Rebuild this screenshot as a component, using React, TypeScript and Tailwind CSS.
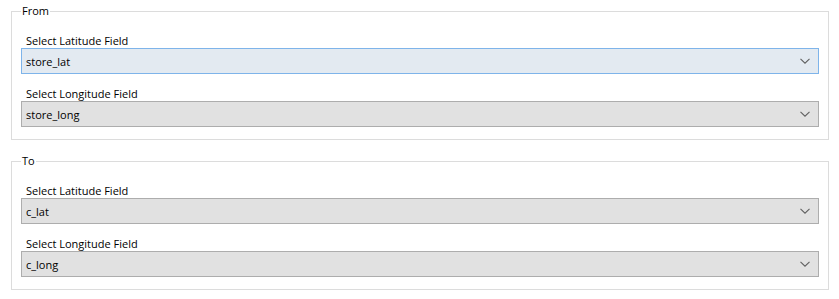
type Field = { label: string; value: string; hover?: boolean };

const GROUPS: { title: string; fields: Field[] }[] = [
  {
    title: "From",
    fields: [
      { label: "Select Latitude Field", value: "store_lat", hover: true },
      { label: "Select Longitude Field", value: "store_long" },
    ],
  },
  {
    title: "To",
    fields: [
      { label: "Select Latitude Field", value: "c_lat" },
      { label: "Select Longitude Field", value: "c_long" },
    ],
  },
];

function Chevron() {
  return (
    <svg width="10" height="6" viewBox="0 0 10 6" className="shrink-0">
      <polyline
        points="0.5,0.8 5,5.2 9.5,0.8"
        fill="none"
        stroke="#606060"
        strokeWidth="1.1"
      />
    </svg>
  );
}

function Combo({ value, hover }: { value: string; hover?: boolean }) {
  return (
    <div
      className={
        "flex h-[26px] items-center justify-between border pl-[4px] pr-[8px] " +
        (hover
          ? "border-[#7eb4ea] bg-[#e3eaf1]"
          : "border-[#adadad] bg-[#e1e1e1]")
      }
    >
      <span className="leading-[15px]">{value}</span>
      <Chevron />
    </div>
  );
}

export default function App() {
  return (
    <div
      className="flex w-[839px] flex-col gap-[13px] bg-white pt-[3px] pl-[11px] pr-[10px] text-[11px] font-medium text-black"
      style={{ fontFamily: '"Segoe UI", "Open Sans", "Noto Sans", sans-serif' }}
    >
      {GROUPS.map((g) => (
        <fieldset
          key={g.title}
          className="border border-[#dcdcdc] px-[9px] pb-[12px] pt-[14px]"
        >
          <legend className="ml-0 px-[1px] leading-[16px]">{g.title}</legend>
          <div className="flex flex-col gap-[12px]">
            {g.fields.map((f) => (
              <div key={f.label} className="flex flex-col">
                <label className="pl-[5px] leading-[15px]">{f.label}</label>
                <Combo value={f.value} hover={f.hover} />
              </div>
            ))}
          </div>
        </fieldset>
      ))}
    </div>
  );
}
